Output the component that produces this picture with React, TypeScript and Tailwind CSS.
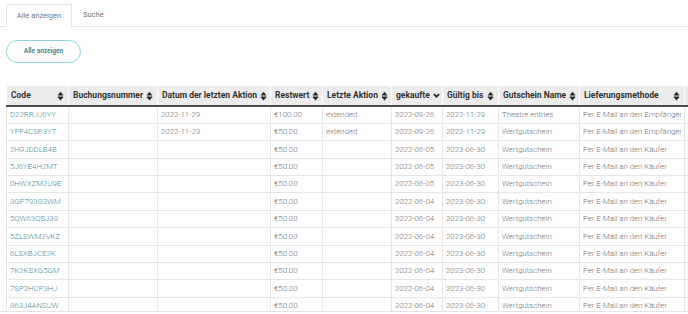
import React from 'react';

type Row = {
  code: string;
  datum: string;
  rest: string;
  aktion: string;
  gekauft: string;
  bis: string;
  name: string;
  methode: string;
};

const rows: Row[] = [
  { code: 'D22RRJJ6YY', datum: '2022-11-29', rest: '€100.00', aktion: 'extended', gekauft: '2022-09-26', bis: '2022-11-29', name: 'Theatre entries', methode: 'Per E-Mail an den Empfänger' },
  { code: 'YPF4CSP3YT', datum: '2022-11-29', rest: '€50.00', aktion: 'extended', gekauft: '2022-09-26', bis: '2022-11-29', name: 'Wertgutschein', methode: 'Per E-Mail an den Empfänger' },
  { code: '2H9JDDLB4B', datum: '', rest: '€50.00', aktion: '', gekauft: '2022-06-05', bis: '2023-06-30', name: 'Wertgutschein', methode: 'Per E-Mail an den Käufer' },
  { code: '5J6YE4H2MT', datum: '', rest: '€50.00', aktion: '', gekauft: '2022-06-05', bis: '2023-06-30', name: 'Wertgutschein', methode: 'Per E-Mail an den Käufer' },
  { code: '0HWXZM2U9E', datum: '', rest: '€50.00', aktion: '', gekauft: '2022-06-05', bis: '2023-06-30', name: 'Wertgutschein', methode: 'Per E-Mail an den Käufer' },
  { code: '3GP793G2WM', datum: '', rest: '€50.00', aktion: '', gekauft: '2022-06-04', bis: '2023-06-30', name: 'Wertgutschein', methode: 'Per E-Mail an den Käufer' },
  { code: '5QW63QSJ39', datum: '', rest: '€50.00', aktion: '', gekauft: '2022-06-04', bis: '2023-06-30', name: 'Wertgutschein', methode: 'Per E-Mail an den Käufer' },
  { code: '5ZLSWM2VKZ', datum: '', rest: '€50.00', aktion: '', gekauft: '2022-06-04', bis: '2023-06-30', name: 'Wertgutschein', methode: 'Per E-Mail an den Käufer' },
  { code: '6LSXBJCE2K', datum: '', rest: '€50.00', aktion: '', gekauft: '2022-06-04', bis: '2023-06-30', name: 'Wertgutschein', methode: 'Per E-Mail an den Käufer' },
  { code: '7K2KSXG5GM', datum: '', rest: '€50.00', aktion: '', gekauft: '2022-06-04', bis: '2023-06-30', name: 'Wertgutschein', methode: 'Per E-Mail an den Käufer' },
  { code: '7SP2HCP3HJ', datum: '', rest: '€50.00', aktion: '', gekauft: '2022-06-04', bis: '2023-06-30', name: 'Wertgutschein', methode: 'Per E-Mail an den Käufer' },
  { code: '863J4ANSUW', datum: '', rest: '€50.00', aktion: '', gekauft: '2022-06-04', bis: '2023-06-30', name: 'Wertgutschein', methode: 'Per E-Mail an den Käufer' },
];

const columns = [
  { label: 'Code', width: 62 },
  { label: 'Buchungsnummer', width: 89 },
  { label: 'Datum der letzten Aktion', width: 113 },
  { label: 'Restwert', width: 52 },
  { label: 'Letzte Aktion', width: 69 },
  { label: 'gekaufte', width: 51, sorted: true },
  { label: 'Gültig bis', width: 56 },
  { label: 'Gutschein Name', width: 81 },
  { label: 'Lieferungsmethode', width: 105 },
  { label: '', width: 80, empty: true },
];

function SortIcon() {
  return (
    <svg viewBox="0 0 10 16" className="h-[10px] w-[7px] shrink-0" fill="#2b2b2b">
      <path d="M5 1 L9.4 6.2 Q9.8 7.2 8.7 7.2 H1.3 Q0.2 7.2 0.6 6.2 Z" />
      <path d="M5 15 L0.6 9.8 Q0.2 8.8 1.3 8.8 H8.7 Q9.8 8.8 9.4 9.8 Z" />
    </svg>
  );
}

function ChevronIcon() {
  return (
    <svg viewBox="0 0 10 10" className="h-[7px] w-[7px] shrink-0" fill="none" stroke="#2b2b2b" strokeWidth="2.6">
      <polyline points="1.2,3 5,6.8 8.8,3" />
    </svg>
  );
}

const td = 'border border-[#e6e6e6] px-[3px] text-[7.8px] font-light text-[#727272] whitespace-nowrap';

export default function App() {
  return (
    <div className="min-h-screen bg-white font-['Roboto','Liberation_Sans',sans-serif] pt-[4px]">
      <div className="flex items-end border-b border-[#e3e3e3] pl-[6px] h-[23px]">
        <div className="flex h-[23px] w-[66px] items-center justify-center border border-b-0 border-[#e3e3e3] bg-white text-[7.5px] text-[#777] -mb-px">
          Alle anzeigen
        </div>
        <div className="flex h-[22px] items-center px-[11px] text-[7.5px] text-[#777]">Suche</div>
      </div>

      <div className="pl-[6px] pt-[13px]">
        <button
          type="button"
          className="flex h-[23px] w-[75px] items-center justify-center rounded-full border border-[#8fd4d8] text-[6.5px] font-bold text-[#3d8c95]"
        >
          Alle anzeigen
        </button>
      </div>

      <div className="mt-[23px] h-[226px] overflow-hidden border-b border-[#e3e3e3] pl-[6px]">
        <table className="table-fixed border-collapse" style={{ width: columns.reduce((s, c) => s + c.width, 0) }}>
          <colgroup>
            {columns.map((c, i) => (
              <col key={i} style={{ width: c.width }} />
            ))}
          </colgroup>
          <thead>
            <tr className="h-[20px] bg-[#ececec] border-b-2 border-[#4d4d4d]">
              {columns.map((c, i) => (
                <th
                  key={i}
                  className="border-x border-white px-[4px] text-left text-[8.5px] font-bold text-[#333] whitespace-nowrap"
                >
                  {c.empty ? null : (
                    <div className="flex items-center justify-between gap-[3px]">
                      <span>{c.label}</span>
                      {c.sorted ? <ChevronIcon /> : <SortIcon />}
                    </div>
                  )}
                </th>
              ))}
            </tr>
          </thead>
          <tbody>
            {rows.map((r) => (
              <tr key={r.code} className="h-[17.4px]">
                <td className={td + ' !text-[#4a8e9e]'}>{r.code}</td>
                <td className={td}></td>
                <td className={td}>{r.datum}</td>
                <td className={td}>{r.rest}</td>
                <td className={td}>{r.aktion}</td>
                <td className={td}>{r.gekauft}</td>
                <td className={td}>{r.bis}</td>
                <td className={td}>{r.name}</td>
                <td className={td}>{r.methode}</td>
                <td className={td}></td>
              </tr>
            ))}
          </tbody>
        </table>
      </div>
    </div>
  );
}
